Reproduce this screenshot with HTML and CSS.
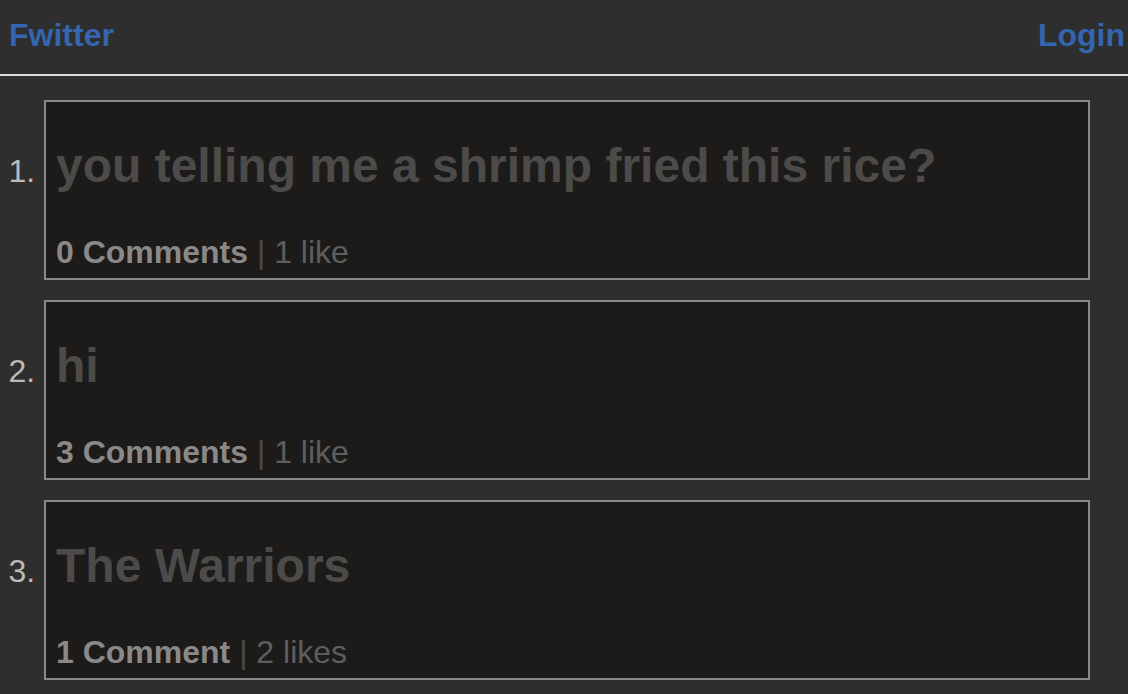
FILE: index.html
```html
<!DOCTYPE html>
<html>
<head>
<meta charset="utf-8">
<link rel="stylesheet" href="styles.css">
</head>
<body>
<header class="top">
  <a class="brand" href="#">Fwitter</a>
  <a class="login" href="#">Login</a>
</header>
<ol class="posts">
  <li class="post">
    <h2 class="title">you telling me a shrimp fried this rice?</h2>
    <div class="meta"><span class="comments">0 Comments</span> <span class="bar">|</span> <span class="likes">1 like</span></div>
  </li>
  <li class="post">
    <h2 class="title">hi</h2>
    <div class="meta"><span class="comments">3 Comments</span> <span class="bar">|</span> <span class="likes">1 like</span></div>
  </li>
  <li class="post">
    <h2 class="title">The Warriors</h2>
    <div class="meta"><span class="comments">1 Comment</span> <span class="bar">|</span> <span class="likes">2 likes</span></div>
  </li>
</ol>
</body>
</html>
```

FILE: styles.css
```css
html, body {
  margin: 0;
  padding: 0;
  background: #2e2e2e;
  font-family: "Liberation Sans", Arial, Helvetica, sans-serif;
}

.top {
  display: flex;
  justify-content: space-between;
  align-items: flex-start;
  padding: 17px 3px 21px 9px;
  border-bottom: 2px solid #dcdcdc;
}

.brand, .login {
  color: #3465ae;
  font-size: 32px;
  font-weight: bold;
  line-height: 36px;
  text-decoration: none;
}

.posts {
  margin: 24px 0 0 0;
  padding: 0 38px 0 44px;
  font-size: 32px;
  color: #bdbaba;
}

.post {
  background: #1c1b1a;
  border: 2px solid #898989;
  padding: 36px 10px 8px 10px;
  margin-bottom: 20px;
}

.post::marker {
  color: #bdbaba;
}

.title {
  margin: 0 0 40px 0;
  font-size: 48px;
  line-height: 56px;
  font-weight: bold;
  color: #4c4b49;
}

.meta {
  font-size: 32px;
  line-height: 36px;
  color: #5e5e5e;
}

.comments {
  font-weight: bold;
  color: #898989;
}

.bar {
  color: #4a4a4a;
}
```
